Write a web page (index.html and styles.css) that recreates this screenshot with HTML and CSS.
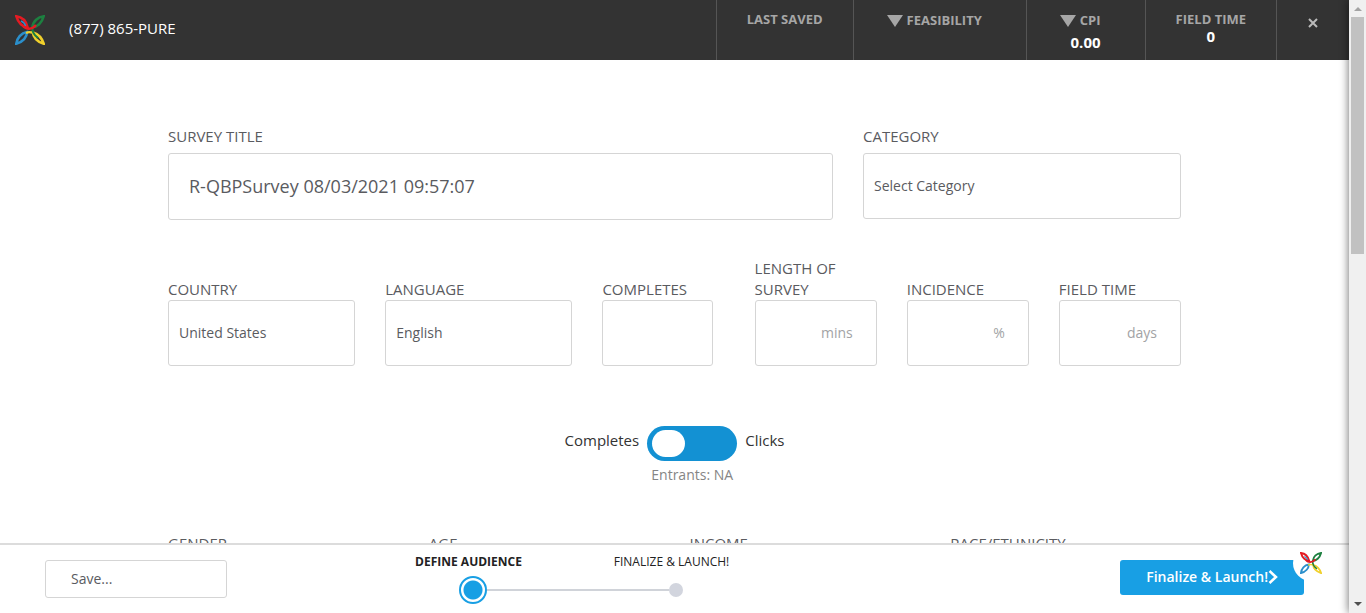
FILE: index.html
```
<!DOCTYPE html>
<html lang="en">
<head>
<meta charset="utf-8">
<meta name="viewport" content="width=device-width, initial-scale=1">
<title>Survey setup</title>
<link rel="stylesheet" href="styles.css">
</head>
<body>
<svg class="defs" aria-hidden="true">
  <symbol id="logo" viewBox="0 0 30 30">
    <g fill="none" stroke-width="2.600">
      <path stroke="#2b8fcb" d="M1.300 28.700C2 23 6 18 12 17C12 22 8 27 1.300 28.700Z"/>
      <path stroke="#f0d02c" d="M28.700 28.700C27 23 23 19 18 17.500C18 22 22 27 28.700 28.700Z"/>
      <path stroke="#1d8040" d="M28.700 1.300C23 2 18 6 17.500 12C22 12 27 8 28.700 1.300Z"/>
      <path stroke="#e31b23" d="M1.300 1.300C7 2 11 6 12.500 12C8 12 3 8 1.300 1.300Z"/>
      <path stroke="#2b8fcb" stroke-width="1.500" d="M6 6C8.500 7 10 9 10.500 11"/>
      <path stroke="#f0d02c" stroke-width="2" d="M11 18C14 16.500 17 17 20 19"/>
      <path stroke="#1d8040" stroke-width="2" d="M17.500 11C16.500 16 19 20 23 23"/>
      <path stroke="#e31b23" stroke-width="2.400" d="M8 11C11 14.500 17 15 21 10"/>
    </g>
  </symbol>
</svg>

<div class="app">
  <header class="topbar">
    <svg class="brand" role="img" aria-label="Logo"><use href="#logo"/></svg>
    <a class="phone" href="#">(877) 865-PURE</a>
    <div class="stats">
      <div class="stat"><span class="stat-label">LAST SAVED</span></div>
      <div class="stat stat-trend">
        <span class="stat-label"><i class="arrow"></i>FEASIBILITY</span>
      </div>
      <div class="stat stat-trend">
        <span class="stat-label"><i class="arrow"></i>CPI</span>
        <strong class="stat-value">0.00</strong>
      </div>
      <div class="stat">
        <span class="stat-label">FIELD TIME</span>
        <strong class="stat-value">0</strong>
      </div>
      <button class="close" type="button" aria-label="Close">
        <svg viewBox="0 0 10 10"><path d="M1 1L9 9M9 1L1 9"/></svg>
      </button>
    </div>
  </header>

  <main class="content">
    <div class="row row-title">
      <div class="field field-spaced">
        <label for="title">SURVEY TITLE</label>
        <input class="box box-title" id="title" type="text" value="R-QBPSurvey 08/03/2021 09:57:07">
      </div>
      <div class="field field-spaced">
        <label for="category">CATEGORY</label>
        <select class="box" id="category"><option>Select Category</option></select>
      </div>
    </div>

    <div class="row row-details">
      <div class="field">
        <label for="country">COUNTRY</label>
        <select class="box" id="country"><option>United States</option></select>
      </div>
      <div class="field">
        <label for="language">LANGUAGE</label>
        <select class="box" id="language"><option>English</option></select>
      </div>
      <div class="field field-narrow">
        <label for="completes">COMPLETES</label>
        <input class="box" id="completes" type="text">
      </div>
      <div class="field">
        <label for="length">LENGTH OF SURVEY</label>
        <input class="box box-unit" id="length" type="text" placeholder="mins">
      </div>
      <div class="field">
        <label for="incidence">INCIDENCE</label>
        <input class="box box-unit" id="incidence" type="text" placeholder="%">
      </div>
      <div class="field">
        <label for="fieldtime">FIELD TIME</label>
        <input class="box box-unit" id="fieldtime" type="text" placeholder="days">
      </div>
    </div>

    <div class="mode">
      <label for="mode">Completes</label>
      <input class="switch" id="mode" type="checkbox" role="switch">
      <label for="mode">Clicks</label>
      <p class="entrants">Entrants: NA</p>
    </div>

    <div class="row row-audience">
      <span>GENDER</span>
      <span>AGE</span>
      <span>INCOME</span>
      <span>RACE/ETHNICITY</span>
    </div>
  </main>

  <footer class="bottombar">
    <button class="save" type="button">Save...</button>
    <nav class="stepper" aria-label="Progress">
      <a class="step step-current" href="#" aria-current="step">DEFINE AUDIENCE</a>
      <a class="step" href="#">FINALIZE &amp; LAUNCH!</a>
      <div class="rail"><i class="mark"></i><i class="line"></i><i class="dot"></i></div>
    </nav>
    <div class="launch-wrap">
      <button class="launch" type="button">Finalize &amp; Launch!<svg viewBox="0 0 10 14"><path d="M1.500 1L8 7L1.500 13"/></svg></button>
      <span class="badge"><svg><use href="#logo"/></svg></span>
    </div>
  </footer>
</div>

<div class="scrollbar" aria-hidden="true">
  <i class="tip tip-up"></i>
  <div class="track"><div class="thumb"></div></div>
  <i class="tip tip-down"></i>
</div>
</body>
</html>
```
FILE: styles.css
```
* { box-sizing: border-box; }

body {
  margin: 0;
  height: 100vh;
  display: flex;
  overflow: hidden;
  background: #fff;
  color: #5a5b5f;
  font: 15px/21px "Open Sans", "Noto Sans", sans-serif;
}

button, input, select { font: inherit; color: inherit; }
button { cursor: pointer; }
a { color: inherit; text-decoration: none; }

.defs { position: absolute; width: 0; height: 0; }

.app {
  flex: 1;
  min-width: 0;
  display: flex;
  flex-direction: column;
}

/* Top bar */
.topbar {
  flex: none;
  height: 60px;
  display: flex;
  align-items: center;
  padding-left: 15px;
  background: #333;
  color: #fff;
}
.brand { width: 30px; height: 30px; }
.phone { margin: 0 0 4px 24px; }
.stats { display: flex; align-self: stretch; margin-left: auto; }
.stat {
  display: flex;
  flex-direction: column;
  align-items: center;
  padding: 11px 30px 0;
  border-left: 1px solid #555;
}
.stat-label {
  display: flex;
  align-items: center;
  gap: 4px;
  color: #a6a6a6;
  font-size: 13px;
  font-weight: 700;
  line-height: 17px;
}
.stat-value { font-size: 15px; line-height: 17px; }
.stat-trend {
  align-items: flex-end;
  gap: 5px;
  padding: 12px 44px 0 33px;
}
.arrow {
  border: 8px solid transparent;
  border-top: 12px solid #a6a6a6;
  border-bottom: 0;
}
.close {
  width: 73px;
  padding: 0 0 15px;
  border: 0;
  border-left: 1px solid #555;
  background: none;
  color: #bbb;
}
.close svg { width: 10px; height: 10px; display: block; margin: auto; }
.close path { stroke: currentColor; stroke-width: 2; }

/* Form */
.content {
  flex: 1;
  min-height: 0;
  overflow: hidden;
  padding: 66px 168px 0;
}
.row { display: grid; column-gap: 30px; }
.row-title { grid-template-columns: 665fr 318fr; align-items: start; }
.row-details {
  grid-template-columns: 187fr 187fr repeat(4, 122fr);
  align-items: end;
  margin-top: 38px;
}
.row-audience { grid-template-columns: repeat(4, 1fr); margin-top: 48px; }
.field { display: flex; flex-direction: column; min-width: 0; }
.field-spaced { gap: 6px; }
.field-narrow { padding-right: 12px; }
.box {
  width: 100%;
  height: 66px;
  margin: 0;
  padding: 0 10px 2px;
  appearance: none;
  border: 1px solid #d5d5d5;
  border-radius: 3px;
  background: #fff;
  font-size: 14px;
}
.box-title { height: 67px; padding: 0 20px 2px; font-size: 18px; }
.box-unit { padding: 0 23px 2px; text-align: right; }
.box::placeholder { color: #a2a3a5; }

.mode {
  display: grid;
  grid-template-columns: auto auto auto;
  justify-content: center;
  column-gap: 8px;
  row-gap: 3px;
  margin-top: 60px;
  color: #333;
}
.mode label { padding-top: 4px; }
.switch {
  appearance: none;
  width: 90px;
  height: 35px;
  margin: 0;
  padding: 4px 5px;
  border-radius: 18px;
  background: #1391d3;
}
.switch::before {
  content: "";
  display: block;
  width: 33px;
  height: 27px;
  border-radius: 14px;
  background: #fff;
}
.switch:checked::before { margin-left: auto; }
.entrants {
  grid-column: 2;
  margin: 0;
  color: #858585;
  font-size: 14px;
  text-align: center;
}

/* Bottom bar */
.bottombar {
  flex: none;
  height: 70px;
  display: flex;
  align-items: flex-start;
  padding: 0 45px;
  border-top: 2px solid #dcdcdc;
}
.save {
  width: 182px;
  height: 38px;
  margin-top: 15px;
  padding: 0 25px 2px;
  border: 1px solid #d5d5d5;
  border-radius: 3px;
  background: #fff;
  font-size: 14px;
  text-align: left;
}
.stepper {
  display: grid;
  grid-template-columns: 203px 203px;
  row-gap: 5px;
  margin: 8px 0 0 140px;
  color: #222;
  font-size: 12px;
  line-height: 18px;
  text-align: center;
}
.step-current { font-weight: 700; }
.rail { grid-column: 1 / -1; display: flex; align-items: center; padding: 0 90px 0 92px; }
.mark {
  width: 28px;
  height: 28px;
  border: 2px solid #189fe4;
  border-radius: 50%;
  background: radial-gradient(circle, #189fe4 9px, #fff 10px);
}
.line { flex: 1; height: 2px; background: #d0d3d9; }
.dot { width: 14px; height: 14px; border-radius: 50%; background: #d2d5de; }

.launch-wrap { position: relative; margin: 15px 0 0 auto; }
.launch {
  display: flex;
  align-items: center;
  height: 35px;
  padding: 0 26px 2px;
  border: 0;
  border-radius: 3px;
  background: #189fe4;
  color: #fff;
  font-size: 14px;
  font-weight: 600;
}
.launch svg { width: 10px; height: 14px; }
.launch path { fill: none; stroke: #fff; stroke-width: 2.5; }
.badge {
  position: absolute;
  top: -15px;
  right: -25px;
  width: 36px;
  height: 36px;
  display: grid;
  place-items: center;
  border-radius: 50%;
  background: #fff;
}
.badge svg { width: 22px; height: 22px; }

/* Scrollbar */
.scrollbar {
  flex: none;
  width: 17px;
  display: flex;
  flex-direction: column;
  align-items: center;
  padding: 7px 0;
  background: #f0f0f0;
  box-shadow: 0 0 10px rgba(0, 0, 0, 0.6);
}
.tip { border: 4px solid transparent; }
.tip-up { border-top: 0; border-bottom-color: #a3a3a3; }
.tip-down { border-bottom: 0; border-top-color: #505050; }
.track { flex: 1; width: 13px; padding: 6px 0; }
.thumb { height: 41%; background: #c1c1c1; }
```
